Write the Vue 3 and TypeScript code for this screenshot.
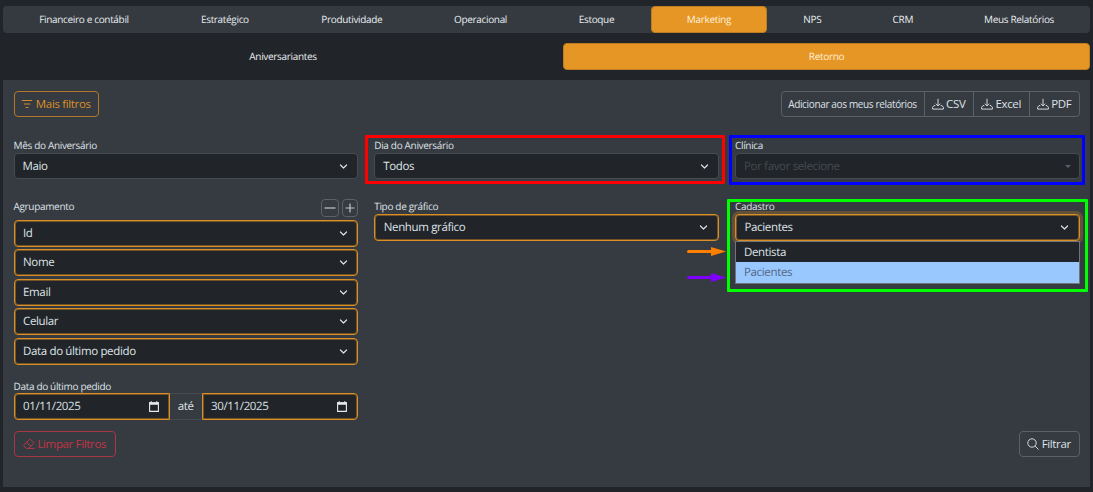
<script setup lang="ts">
interface Tab { label: string; active?: boolean }

const tabs: Tab[] = [
  { label: 'Financeiro e contábil' },
  { label: 'Estratégico' },
  { label: 'Produtividade' },
  { label: 'Operacional' },
  { label: 'Estoque' },
  { label: 'Marketing', active: true },
  { label: 'NPS' },
  { label: 'CRM' },
  { label: 'Meus Relatórios' },
]
const groups: string[] = ['Id', 'Nome', 'Email', 'Celular', 'Data do último pedido']
const exportsList: string[] = ['CSV', 'Excel', 'PDF']
const arrows = [
  { kind: 'orange', color: '#ff8000' },
  { kind: 'purple', color: '#8000ff' },
]
</script>

<template>
  <div class="page">
    <nav class="tabs">
      <a v-for="t in tabs" :key="t.label" class="tab" :class="{ active: t.active }">{{ t.label }}</a>
    </nav>
    <nav class="subtabs">
      <a class="tab">Aniversariantes</a>
      <a class="tab active">Retorno</a>
    </nav>

    <main class="panel">
      <div class="toolbar">
        <button class="btn warn">
          <svg class="ic" viewBox="0 0 12 12"><path d="M.8 2.5h10.4M2.8 6h6.4M4.6 9.5h2.8" /></svg>
          <span>Mais filtros</span>
        </button>
        <div class="btn-group">
          <button class="btn add">Adicionar aos meus relatórios</button>
          <button v-for="e in exportsList" :key="e" class="btn export">
            <svg class="ic" viewBox="0 0 12 12"><path d="M6 .8v7M3.8 5.7 6 7.9l2.2-2.2M3.3 7.6H2L.6 9.3v1.8h10.8V9.3L10 7.6H8.7" /></svg>
            <span>{{ e }}</span>
          </button>
        </div>
      </div>

      <div class="row first">
        <div class="field">
          <label>Mês do Aniversário</label>
          <div class="select plain">Maio<svg class="chev" viewBox="0 0 10 10"><path d="M1.6 3.3 5 6.7l3.4-3.4" /></svg></div>
        </div>
        <div class="field">
          <label>Dia do Aniversário</label>
          <div class="select plain">Todos<svg class="chev" viewBox="0 0 10 10"><path d="M1.6 3.3 5 6.7l3.4-3.4" /></svg></div>
          <i class="mark red"></i>
        </div>
        <div class="field">
          <label>Clínica</label>
          <div class="select plain disabled">Por favor selecione<i class="caret"></i></div>
          <i class="mark blue"></i>
        </div>
      </div>

      <div class="row second">
        <div class="field">
          <div class="label-line">
            <label>Agrupamento</label>
            <button class="mini wide"><svg viewBox="0 0 14 14"><path d="M1.5 7h11" /></svg></button>
            <button class="mini"><svg viewBox="0 0 14 14"><path d="M2.5 7h9M7 2.5v9" /></svg></button>
          </div>
          <div class="stack">
            <div v-for="g in groups" :key="g" class="select outlined">{{ g }}<svg class="chev" viewBox="0 0 10 10"><path d="M1.6 3.3 5 6.7l3.4-3.4" /></svg></div>
          </div>
        </div>
        <div class="field">
          <label>Tipo de gráfico</label>
          <div class="select outlined">Nenhum gráfico<svg class="chev" viewBox="0 0 10 10"><path d="M1.6 3.3 5 6.7l3.4-3.4" /></svg></div>
          <svg v-for="a in arrows" :key="a.kind" class="arrow" :class="a.kind" viewBox="0 0 39 9">
            <path d="M1.5 4.5H26" :stroke="a.color" stroke-width="3" stroke-linecap="round" />
            <path d="M24 0 39 4.5 24 9z" :fill="a.color" />
          </svg>
        </div>
        <div class="field">
          <label>Cadastro</label>
          <div class="select outlined focus">Pacientes<svg class="chev" viewBox="0 0 10 10"><path d="M1.6 3.3 5 6.7l3.4-3.4" /></svg></div>
          <div class="menu">
            <div class="option">Dentista</div>
            <div class="option chosen">Pacientes</div>
          </div>
          <i class="mark green"></i>
        </div>
      </div>

      <div class="row third">
        <div class="field">
          <label>Data do último pedido</label>
          <div class="dates">
            <div class="select outlined date">01/11/2025<svg class="cal" viewBox="0 0 10 11"><path d="M.6 2h8.8v8.4H.6z" /><path class="solid" d="M0 1.3h10v2.5H0zM1.6.2h1.2v1.4H1.6zM7.2.2h1.2v1.4H7.2z" /></svg></div>
            <span class="addon">até</span>
            <div class="select outlined date">30/11/2025<svg class="cal" viewBox="0 0 10 11"><path d="M.6 2h8.8v8.4H.6z" /><path class="solid" d="M0 1.3h10v2.5H0zM1.6.2h1.2v1.4H1.6zM7.2.2h1.2v1.4H7.2z" /></svg></div>
          </div>
        </div>
      </div>

      <div class="actions">
        <button class="btn danger">
          <svg class="ic" viewBox="0 0 12 12"><path d="M6.5 1.4a.8.8 0 0 1 1.1 0l3 3a.8.8 0 0 1 0 1.1L5.7 10.4H3.4L.9 7.9a.8.8 0 0 1 0-1.1zM3.5 4.4l4.5 4.1M5.7 10.4h5.8" /></svg>
          <span>Limpar Filtros</span>
        </button>
        <button class="btn search">
          <svg class="ic" viewBox="0 0 12 12"><circle cx="5" cy="5" r="4.2" /><path d="m8.1 8.1 3.4 3.4" /></svg>
          <span>Filtrar</span>
        </button>
      </div>
    </main>
  </div>
</template>

<style>
html, body { background: #212529; overflow: hidden; }
</style>

<style scoped>
* { box-sizing: border-box; }
.page {
  height: 492px;
  padding: 6px 3px 0;
  background: #212529;
  color: #dee2e6;
  font-family: "Open Sans", "Noto Sans", sans-serif;
  font-size: 11.5px;
  letter-spacing: -.35px;
  text-rendering: geometricPrecision;
}
.tabs {
  display: grid;
  grid-template-columns: 162fr 120fr 134fr 123.5fr 108.5fr 116.5fr 90.5fr 90.5fr 142fr;
  height: 27px;
  background: #343a40;
  border-radius: 4px;
}
.subtabs {
  display: grid;
  grid-template-columns: 560fr 527fr;
  height: 27px;
  margin: 10px 0;
}
.tab {
  display: flex;
  align-items: center;
  justify-content: center;
  padding-bottom: 1px;
  font-size: 10px;
  font-weight: 500;
  letter-spacing: -.33px;
  color: #e9ecef;
  border-radius: 4px;
}
.tab.active { background: #e69624; border: 1px solid #bd7d22; color: #fff1dc; }
.panel {
  height: 407px;
  padding: 11px 10.5px 0;
  background: #363a41;
}
.toolbar { display: flex; justify-content: space-between; height: 26px; }
.btn {
  display: flex;
  align-items: center;
  justify-content: center;
  height: 26px;
  gap: 2.5px;
  padding: 0 0 1px;
  border: 1px solid #5a6169;
  border-radius: 4px;
  background: transparent;
  color: #dee2e6;
  font: inherit;
  letter-spacing: -.35px;
  white-space: nowrap;
}
.ic { width: 12px; height: 12px; fill: none; stroke: currentColor; stroke-width: .95; flex: none; }
.warn { width: 85px; border-color: #b37929; color: #dc9028; }
.btn-group { display: flex; }
.btn-group .btn { border-radius: 0; margin-left: -1px; }
.btn-group .btn:first-child { border-radius: 4px 0 0 4px; }
.btn-group .btn:last-child { border-radius: 0 4px 4px 0; }
.add { width: 144px; font-size: 10px; font-weight: 500; }
.export { width: 50px; }
.export:nth-child(3) { width: 57px; }
.export:nth-child(4) { width: 51px; }
.row { display: grid; grid-template-columns: repeat(3, 344.5px); justify-content: space-between; }
.first { margin-top: 20px; height: 42px; }
.second { margin-top: 19px; height: 167px; }
.third { margin-top: 13px; height: 42px; }
.field { position: relative; }
label { display: block; height: 16px; line-height: 17px; font-size: 10px; font-weight: 500; letter-spacing: -.33px; color: #dee2e6; }
.third label { height: 15px; }
.select {
  display: flex;
  align-items: center;
  justify-content: space-between;
  height: 26px;
  padding: 0 9px 0 8px;
  background: #212529;
  border: 1px solid #444b52;
  border-radius: 4px;
}
.select.outlined {
  height: 27px;
  border-color: #d98f25;
  box-shadow: inset 0 0 0 1px rgba(217, 143, 37, .45);
  padding-right: 9.5px;
  padding-left: 8.5px;
}
.select.disabled { color: #444a50; padding-right: 8px; }
.caret { border: 3px solid transparent; border-top: 3px solid #596068; border-bottom: 0; }
.chev { width: 9px; height: 9px; fill: none; stroke: #dee2e6; stroke-width: 1.3; stroke-linecap: round; stroke-linejoin: round; }
.label-line { display: flex; gap: 3px; height: 21.5px; }
.label-line label { flex: 1; }
.mini {
  width: 16px;
  height: 18px;
  margin-top: 1px;
  padding: 0;
  display: flex;
  align-items: center;
  justify-content: center;
  background: transparent;
  border: 1px solid #5a6169;
  border-radius: 4px;
}
.mini.wide { width: 18px; }
.mini svg { flex: none; width: 14px; height: 14px; fill: none; stroke: #c3c7cb; stroke-width: 1.2; }
.stack { display: grid; gap: 2.65px; }
.select.focus { box-shadow: inset 0 0 0 1px rgba(217, 143, 37, .45), 0 0 0 3px rgba(230, 150, 36, .25); }
.menu {
  position: absolute;
  z-index: 1;
  top: 43px;
  left: 0;
  width: 100%;
  background: #212529;
  border: 1px solid #6f757b;
}
.option { height: 20.3px; line-height: 21px; padding-left: 8px; }
.chosen { background: #99c8ff; color: #54677f; }
.dates { display: flex; }
.select.date { width: 156.5px; padding-right: 10px; }
.date:first-child { border-radius: 4px 0 0 4px; }
.date:last-child { border-radius: 0 4px 4px 0; }
.addon {
  flex: 1;
  display: flex;
  align-items: center;
  justify-content: center;
  border: solid #434a51;
  border-width: 1px 0;
}
.cal { width: 10px; height: 11px; fill: none; stroke: #e8eaec; stroke-width: 1.1; }
.cal .solid { fill: #e8eaec; stroke: none; }
.actions { display: flex; justify-content: space-between; margin-top: 11px; }
.danger { width: 102px; border-color: #a93643; color: #c43545; }
.search { width: 61px; }
.mark { position: absolute; z-index: 2; border: 3px solid; border-radius: 1px; }
.red { left: -9.5px; top: -2px; width: 360px; height: 49px; border-color: #f00; }
.blue { left: -6px; top: -2px; width: 356px; height: 50px; border-color: #00f; }
.green { left: -8px; top: 1px; width: 361px; height: 93px; border-color: #0f0; z-index: 0; }
.arrow { position: absolute; left: 312.5px; width: 39px; height: 9px; z-index: 3; fill: none; }
.arrow.orange { top: 49.2px; }
.arrow.purple { top: 75px; }
</style>
